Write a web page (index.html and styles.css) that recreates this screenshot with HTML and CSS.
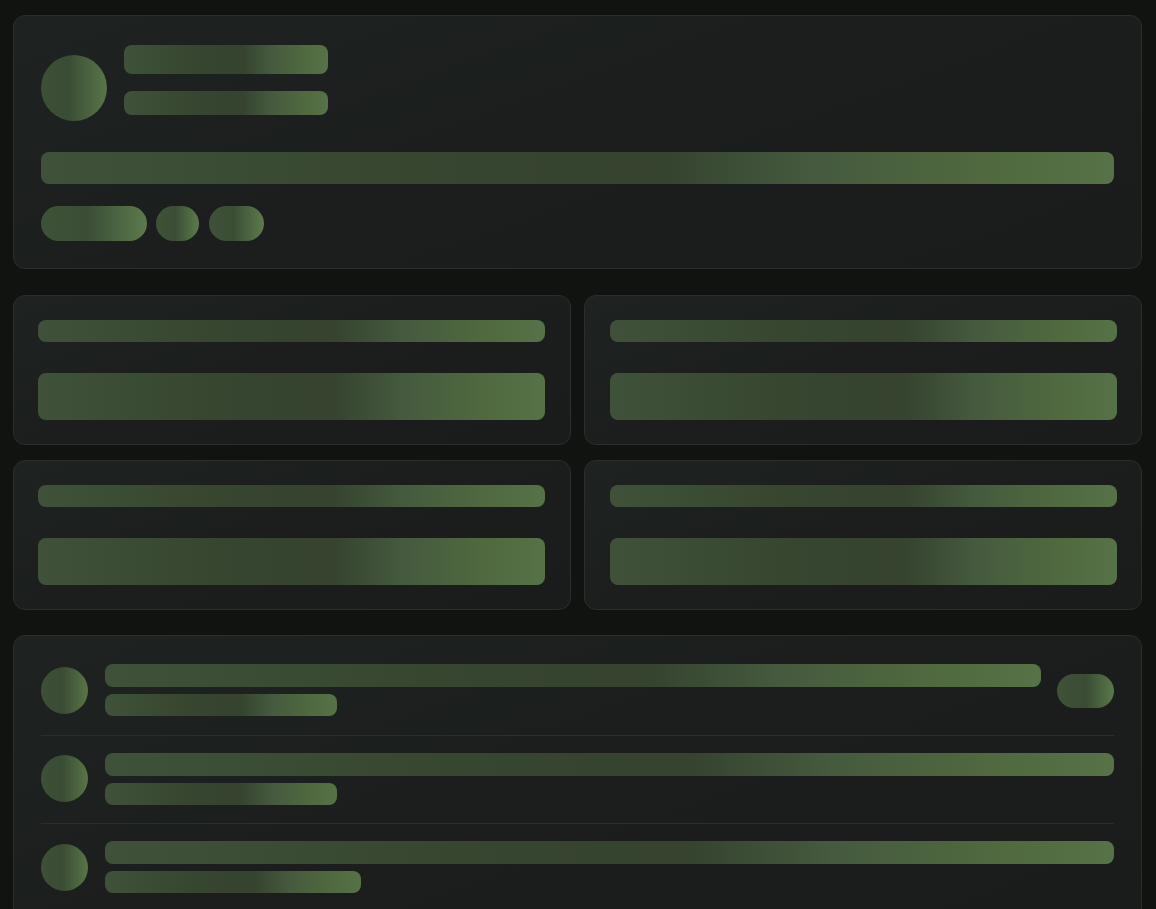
FILE: index.html
```html
<!DOCTYPE html>
<html lang="en">
<head>
<meta charset="utf-8">
<title>Loading</title>
<link rel="stylesheet" href="styles.css">
</head>
<body>
<main class="page">
  <section class="card hero">
    <div class="hero-head">
      <div class="sk avatar-lg"></div>
      <div class="hero-lines">
        <div class="sk line-title"></div>
        <div class="sk line-sub"></div>
      </div>
    </div>
    <div class="sk line-long"></div>
    <div class="pills">
      <div class="sk pill p1"></div>
      <div class="sk pill p2"></div>
      <div class="sk pill p3"></div>
    </div>
  </section>

  <section class="grid">
    <div class="card tile"><div class="sk tile-a"></div><div class="sk tile-b"></div></div>
    <div class="card tile"><div class="sk tile-a"></div><div class="sk tile-b"></div></div>
    <div class="card tile"><div class="sk tile-a"></div><div class="sk tile-b"></div></div>
    <div class="card tile"><div class="sk tile-a"></div><div class="sk tile-b"></div></div>
  </section>

  <section class="card list">
    <div class="row">
      <div class="sk avatar-sm"></div>
      <div class="row-lines">
        <div class="sk row-a"></div>
        <div class="sk row-b"></div>
      </div>
      <div class="sk row-pill"></div>
    </div>
    <div class="row">
      <div class="sk avatar-sm"></div>
      <div class="row-lines">
        <div class="sk row-a"></div>
        <div class="sk row-b"></div>
      </div>
    </div>
    <div class="row">
      <div class="sk avatar-sm"></div>
      <div class="row-lines">
        <div class="sk row-a"></div>
        <div class="sk row-b wide"></div>
      </div>
    </div>
  </section>
</main>
</body>
</html>
```

FILE: styles.css
```css
* { box-sizing: border-box; }
html, body { margin: 0; padding: 0; }
body {
  background: #111311;
  height: 909px;
  overflow: hidden;
}
.page {
  padding: 15px 14px 0 13px;
  display: flex;
  flex-direction: column;
}
.card {
  background: linear-gradient(160deg, #1e2321 0%, #1b1e1c 45%, #1a1c1b 100%);
  border: 1px solid #2a2e2c;
  border-radius: 12px;
}
.sk {
  background: linear-gradient(90deg, #3f5239 0%, #37462f 35%, #35432f 58%, #455a3e 72%, #50693f 88%, #567247 100%);
  border-radius: 8px;
}

/* hero */
.hero {
  height: 254px;
  padding: 29px 27px 0 27px;
}
.hero-head {
  display: flex;
  gap: 17px;
  align-items: flex-start;
}
.avatar-lg {
  width: 66px;
  height: 66px;
  border-radius: 50%;
  margin-top: 10px;
  background: linear-gradient(90deg, #3d5137 0%, #3a4c34 40%, #587648 100%);
}
.hero-lines {
  display: flex;
  flex-direction: column;
  gap: 17px;
}
.line-title { width: 204px; height: 29px; }
.line-sub { width: 204px; height: 24px; }
.line-long {
  margin-top: 31px;
  height: 32px;
}
.pills {
  margin-top: 22px;
  display: flex;
  gap: 9px;
}
.pill { height: 35px; border-radius: 18px; }
.p1 { width: 106px; }
.p2 { width: 43px; }
.p3 { width: 55px; margin-left: 1px; }
.p1, .p2, .p3 {
  background: linear-gradient(90deg, #3e5238 0%, #3b4e35 45%, #5c7b4c 100%);
}

/* grid */
.grid {
  margin-top: 26px;
  display: grid;
  grid-template-columns: 1fr 1fr;
  column-gap: 13px;
  row-gap: 15px;
}
.tile {
  height: 150px;
  padding: 24px 25px 0 24px;
}
.tile:nth-child(2n) { padding: 24px 24px 0 25px; }
.tile-a { height: 22px; }
.tile-b { height: 47px; margin-top: 31px; }

/* list */
.list {
  margin-top: 25px;
  padding: 28px 27px 0 27px;
  height: 300px;
}
.row {
  display: flex;
  align-items: center;
  gap: 17px;
  padding: 17px 0 18.5px;
  border-bottom: 1px solid #2a2e2c;
}
.row:first-child { padding-top: 0; }
.row:last-child { border-bottom: none; }
.avatar-sm {
  width: 47px;
  height: 47px;
  border-radius: 50%;
  flex: none;
  background: linear-gradient(90deg, #3d5137 0%, #3a4c34 45%, #587648 100%);
}
.row-lines {
  flex: 1;
  display: flex;
  flex-direction: column;
  gap: 7px;
}
.row-a { height: 23px; }
.row-b { height: 22px; width: 232px; }
.row-b.wide { width: 256px; }
.row-pill {
  width: 57px;
  height: 34px;
  border-radius: 17px;
  flex: none;
  margin-left: -1px;
  margin-top: 1px;
  background: linear-gradient(90deg, #3f5339 0%, #3a4c34 50%, #5a7849 100%);
}
```
